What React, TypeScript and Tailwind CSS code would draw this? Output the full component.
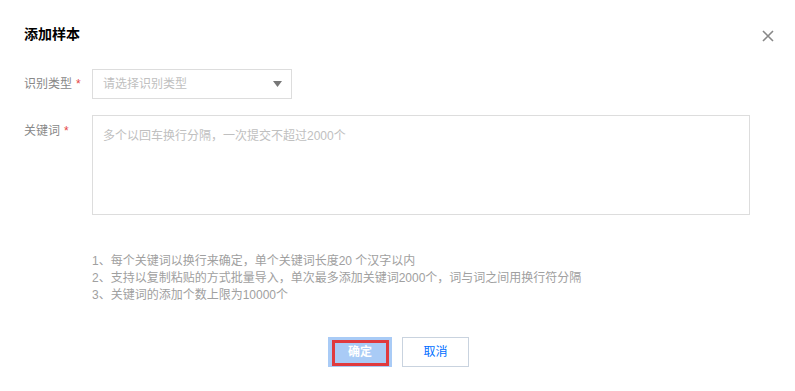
import React from "react";

export default function App() {
  const font = { fontFamily: '"Liberation Sans", "Noto Sans CJK SC", sans-serif' };
  return (
    <div className="w-[795px] h-[391px] bg-white relative" style={font}>
      <div className="pt-[24px] px-[24px]">
        <div className="text-[14px] leading-[20px] font-bold text-[#000]">添加样本</div>
      </div>
      <button className="absolute left-[761px] top-[29px] w-[14px] h-[14px] flex items-center justify-center">
        <svg width="12" height="12" viewBox="0 0 12 12">
          <path d="M1 1L11 11M11 1L1 11" stroke="#888" strokeWidth="1.6" />
        </svg>
      </button>

      <div className="pl-[24px] mt-[25px]">
        <div className="flex items-center h-[30px]">
          <div className="w-[68px] text-[12px] text-[#888] flex items-center">
            识别类型<span className="text-[#e54545] ml-[4px]">*</span>
          </div>
          <div className="w-[200px] h-[30px] border border-[#ddd] flex items-center justify-between pl-[10px] pr-[9px]">
            <span className="text-[12px] text-[#c0c0c0]">请选择识别类型</span>
            <svg width="9" height="6" viewBox="0 0 9 6">
              <path d="M0 0H9L4.5 6Z" fill="#777" />
            </svg>
          </div>
        </div>

        <div className="flex mt-[16px]">
          <div className="w-[68px] text-[12px] text-[#888] pt-[8px] leading-[16px]">
            关键词<span className="text-[#e54545] ml-[4px]">*</span>
          </div>
          <div className="w-[658px] h-[100px] border border-[#ddd] px-[10px] pt-[7px]">
            <span className="text-[12px] leading-[16px] text-[#c0c0c0]">多个以回车换行分隔，一次提交不超过2000个</span>
          </div>
        </div>

        <div className="ml-[68px] mt-[38px] text-[12px] leading-[17px] text-[#a0a0a0]">
          <div>1、每个关键词以换行来确定，单个关键词长度20 个汉字以内</div>
          <div>2、支持以复制粘贴的方式批量导入，单次最多添加关键词2000个，词与词之间用换行符分隔</div>
          <div>3、关键词的添加个数上限为10000个</div>
        </div>
      </div>

      <div className="flex justify-center gap-[10px] mt-[33px] pl-[2px]">
        <div className="relative w-[64px] h-[30px] bg-[#a9cbf6] flex items-center justify-center">
          <span className="text-[12px] text-white font-bold">确定</span>
          <div className="absolute left-[4px] right-[3px] top-[3px] bottom-[1px] border-[3px] border-[#e03a3e]"></div>
        </div>
        <div className="w-[67px] h-[30px] border border-[#c9d3df] bg-white flex items-center justify-center">
          <span className="text-[12px] text-[#006eff]">取消</span>
        </div>
      </div>
    </div>
  );
}
